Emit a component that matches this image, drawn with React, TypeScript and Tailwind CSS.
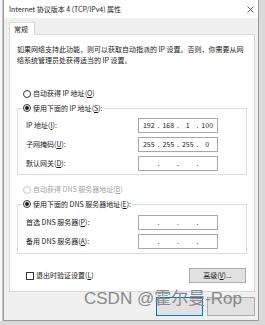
import React from 'react';

const ui = "font-['Noto_Sans_CJK_SC','Noto_Sans',sans-serif] text-[7px] leading-[11px] text-[#1a1a1a]";

// underlined access key, e.g. (O)
const Key: React.FC<{ k: string }> = ({ k }) => (
  <span>
    (<span className="underline underline-offset-1">{k}</span>)
  </span>
);

const Radio: React.FC<{ checked?: boolean; disabled?: boolean }> = ({ checked, disabled }) => (
  <span
    className={`w-[8px] h-[8px] rounded-full border flex items-center justify-center bg-white ${
      disabled ? 'border-[#c4c4c4]' : 'border-[#333333]'
    }`}
  >
    {checked && <span className="w-[4px] h-[4px] rounded-full bg-[#1a1a1a]" />}
  </span>
);

const IpBox: React.FC<{ parts?: string[] }> = ({ parts = ['', '', '', ''] }) => (
  <div className="w-[80px] h-[15px] border border-[#a8a8a8] bg-white flex items-center px-[2px]">
    {parts.map((p, i) => (
      <React.Fragment key={i}>
        <span className="w-[16px] text-center">{p}</span>
        {i < 3 && <span className="w-[4px] text-center">.</span>}
      </React.Fragment>
    ))}
  </div>
);

const Row: React.FC<{ label: React.ReactNode; parts?: string[] }> = ({ label, parts }) => (
  <div className="flex items-center h-[15px]">
    <span className="w-[112px]">{label}</span>
    <IpBox parts={parts} />
  </div>
);

export default function App() {
  return (
    <div className={`w-[265px] h-[325px] bg-[#d9d9d9] relative overflow-hidden ${ui}`}>
      <div className="flex h-[321px]">
        {/* background window edge on the left */}
        <div className="w-[3px] bg-[#f7f7f7] border-r border-[#c9c9c9]" />

        {/* dialog */}
        <div className="w-[256px] flex flex-col bg-[#f0f0f0] border border-[#9a9a9a] border-t-0">
          {/* title bar */}
          <div className="h-[18px] bg-white flex items-center justify-between pl-[5px] pr-[3px]">
            <span>Internet 协议版本 4 (TCP/IPv4) 属性</span>
            <svg width="7" height="7" viewBox="0 0 7 7" className="mr-[1px]">
              <path d="M0.5 0.5L6.5 6.5M6.5 0.5L0.5 6.5" stroke="#333" strokeWidth="0.8" />
            </svg>
          </div>

          <div className="flex-1 flex flex-col pl-[5px] pr-[3px] pt-[4px]">
            {/* tab */}
            <div className="w-[26px] h-[13px] bg-white border border-b-0 border-[#d9d9d9] -mb-[1px] relative z-10 pl-[4px] flex items-center">
              常规
            </div>

            {/* panel */}
            <div className="bg-white border border-[#d9d9d9] flex flex-col px-[7px] pt-[9px] pb-[8px]">
              <p className="whitespace-nowrap">
                如果网络支持此功能，则可以获取自动指派的 IP 设置。否则，你需要从网
                <br />
                络系统管理员处获得适当的 IP 设置。
              </p>

              <div className="mt-[22px] pl-[6px] flex items-center gap-[2px] h-[11px]">
                <Radio />
                <span>
                  自动获得 IP 地址<Key k="O" />
                </span>
              </div>

              <fieldset className="mt-[3px] border border-[#dcdcdc] pl-[8px] pr-[8px] pt-[4px] pb-[3px] flex flex-col gap-[4px]">
                <legend className="-ml-[4px] px-[1px] flex items-center gap-[2px] h-[12px]">
                  <Radio checked />
                  <span>
                    使用下面的 IP 地址<Key k="S" />:
                  </span>
                </legend>
                <Row label={<>IP 地址<Key k="I" />:</>} parts={['192', '168', '1', '100']} />
                <Row label={<>子网掩码<Key k="U" />:</>} parts={['255', '255', '255', '0']} />
                <Row label={<>默认网关<Key k="D" />:</>} />
              </fieldset>

              <div className="mt-[9px] pl-[6px] flex items-center gap-[2px] h-[11px] text-[#a3a3a3]">
                <Radio disabled />
                <span>
                  自动获得 DNS 服务器地址<Key k="B" />
                </span>
              </div>

              <fieldset className="mt-[3px] border border-[#dcdcdc] pl-[8px] pr-[8px] pt-[5px] pb-[4px] flex flex-col gap-[4px]">
                <legend className="-ml-[4px] px-[1px] flex items-center gap-[2px] h-[12px]">
                  <Radio checked />
                  <span>
                    使用下面的 DNS 服务器地址<Key k="E" />:
                  </span>
                </legend>
                <Row label={<>首选 DNS 服务器<Key k="P" />:</>} />
                <Row label={<>备用 DNS 服务器<Key k="A" />:</>} />
              </fieldset>

              <div className="mt-[14px] flex items-center justify-between pl-[9px] pr-[1px]">
                <div className="flex items-center gap-[2px]">
                  <span className="w-[8px] h-[8px] border border-[#333333] bg-white" />
                  <span>
                    退出时验证设置<Key k="L" />
                  </span>
                </div>
                <button className="w-[57px] h-[15px] bg-[#e1e1e1] border border-[#adadad] flex items-center justify-center">
                  高级<Key k="V" />...
                </button>
              </div>
            </div>

            {/* dialog buttons, mostly hidden under the watermark */}
            <div className="flex justify-end gap-[4px] pt-[5px] pr-[0px]">
              <button className="w-[47px] h-[19px] bg-[#e1e1e1] border border-[#0078d7]" />
              <button className="w-[48px] h-[19px] bg-[#e1e1e1] border border-[#adadad]" />
            </div>
          </div>
        </div>
      </div>

      {/* CSDN watermark */}
      <div className="absolute left-[84px] top-[290px] font-['Liberation_Sans','Noto_Sans_CJK_SC',sans-serif] text-[17px] leading-none text-[#8a8a8a] whitespace-nowrap">
        CSDN @霍尔曼-Rop
      </div>
    </div>
  );
}
